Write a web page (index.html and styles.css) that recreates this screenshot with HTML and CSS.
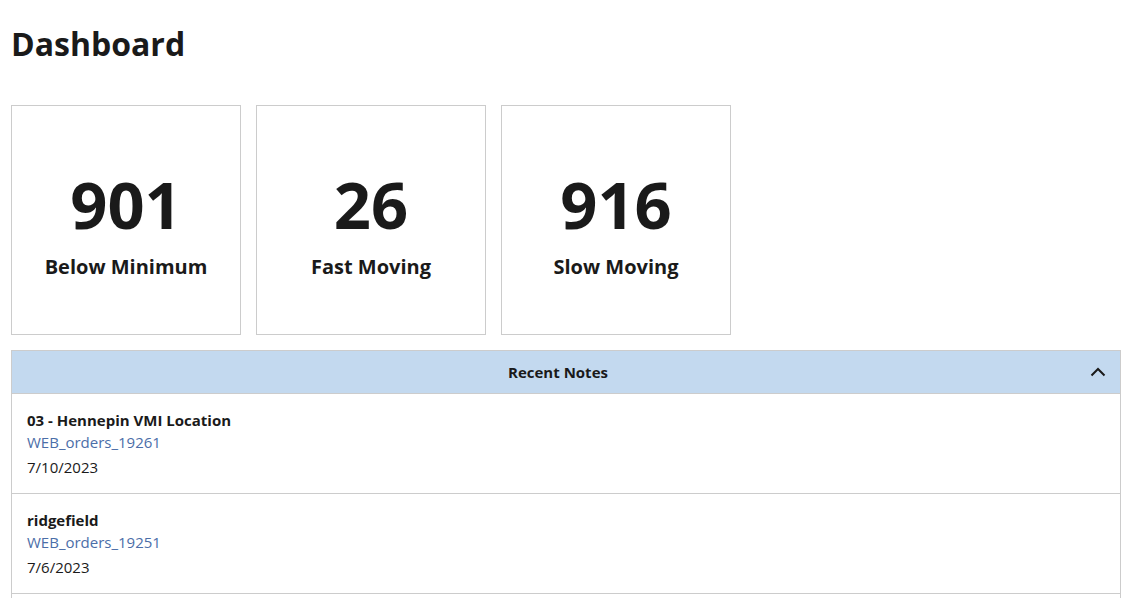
FILE: index.html
```html
<!DOCTYPE html>
<html lang="en">
<head>
  <meta charset="UTF-8">
  <title>Dashboard</title>
  <link rel="stylesheet" href="styles.css">
</head>
<body>
  <div class="page">
    <h1 class="page-title">Dashboard</h1>

    <div class="stat-cards">
      <div class="stat-card">
        <div class="stat-value">901</div>
        <div class="stat-label">Below Minimum</div>
      </div>
      <div class="stat-card">
        <div class="stat-value">26</div>
        <div class="stat-label">Fast Moving</div>
      </div>
      <div class="stat-card">
        <div class="stat-value">916</div>
        <div class="stat-label">Slow Moving</div>
      </div>
    </div>

    <div class="notes-panel">
      <div class="notes-header">
        <span class="notes-title">Recent Notes</span>
        <svg class="notes-toggle" width="16" height="16" viewBox="0 0 16 16">
          <path d="M1.5 11.5 L8 5 L14.5 11.5" fill="none" stroke="#1a1a1a" stroke-width="2"/>
        </svg>
      </div>
      <div class="note-row">
        <div class="note-location">03 - Hennepin VMI Location</div>
        <a class="note-link" href="#">WEB_orders_19261</a>
        <div class="note-date">7/10/2023</div>
      </div>
      <div class="note-row">
        <div class="note-location">ridgefield</div>
        <a class="note-link" href="#">WEB_orders_19251</a>
        <div class="note-date">7/6/2023</div>
      </div>
      <div class="note-row">
        <div class="note-location">ridgefield</div>
        <a class="note-link" href="#">WEB_orders_19250</a>
        <div class="note-date">7/6/2023</div>
      </div>
    </div>
  </div>
</body>
</html>
```

FILE: styles.css
```css
* {
  margin: 0;
  padding: 0;
  box-sizing: border-box;
}
body {
  font-family: "Open Sans", Arial, sans-serif;
  color: #1a1a1a;
  background: #fff;
}
.page {
  padding: 0 14px 0 11px;
}
.page-title {
  font-size: 32px;
  font-weight: 700;
  line-height: 44px;
  padding-top: 22px;
  margin-bottom: 39px;
}
.stat-cards {
  display: flex;
  gap: 15px;
  margin-bottom: 15px;
}
.stat-card {
  width: 230px;
  height: 230px;
  border: 1px solid #ccc;
  display: flex;
  flex-direction: column;
  align-items: center;
  justify-content: center;
  padding-top: 9px;
}
.stat-value {
  font-size: 65px;
  font-weight: 700;
  line-height: 70px;
}
.stat-label {
  font-size: 20px;
  font-weight: 700;
  line-height: 26px;
  margin-top: 15px;
}
.notes-panel {
  border: 1px solid #ccc;
}
.notes-header {
  height: 43px;
  padding: 0 14px;
  background: #c3d9ef;
  border-bottom: 1px solid #ccc;
  display: flex;
  align-items: center;
}
.notes-title {
  flex: 1;
  text-align: center;
  font-size: 15px;
  font-weight: 700;
}
.note-row {
  padding: 15px 15px;
  border-bottom: 1px solid #ccc;
  font-size: 15px;
  line-height: 22px;
}
.note-location {
  font-weight: 700;
}
.note-link {
  display: block;
  color: #4b6ea8;
  text-decoration: none;
}
.note-date {
  margin-top: 3px;
}
```
